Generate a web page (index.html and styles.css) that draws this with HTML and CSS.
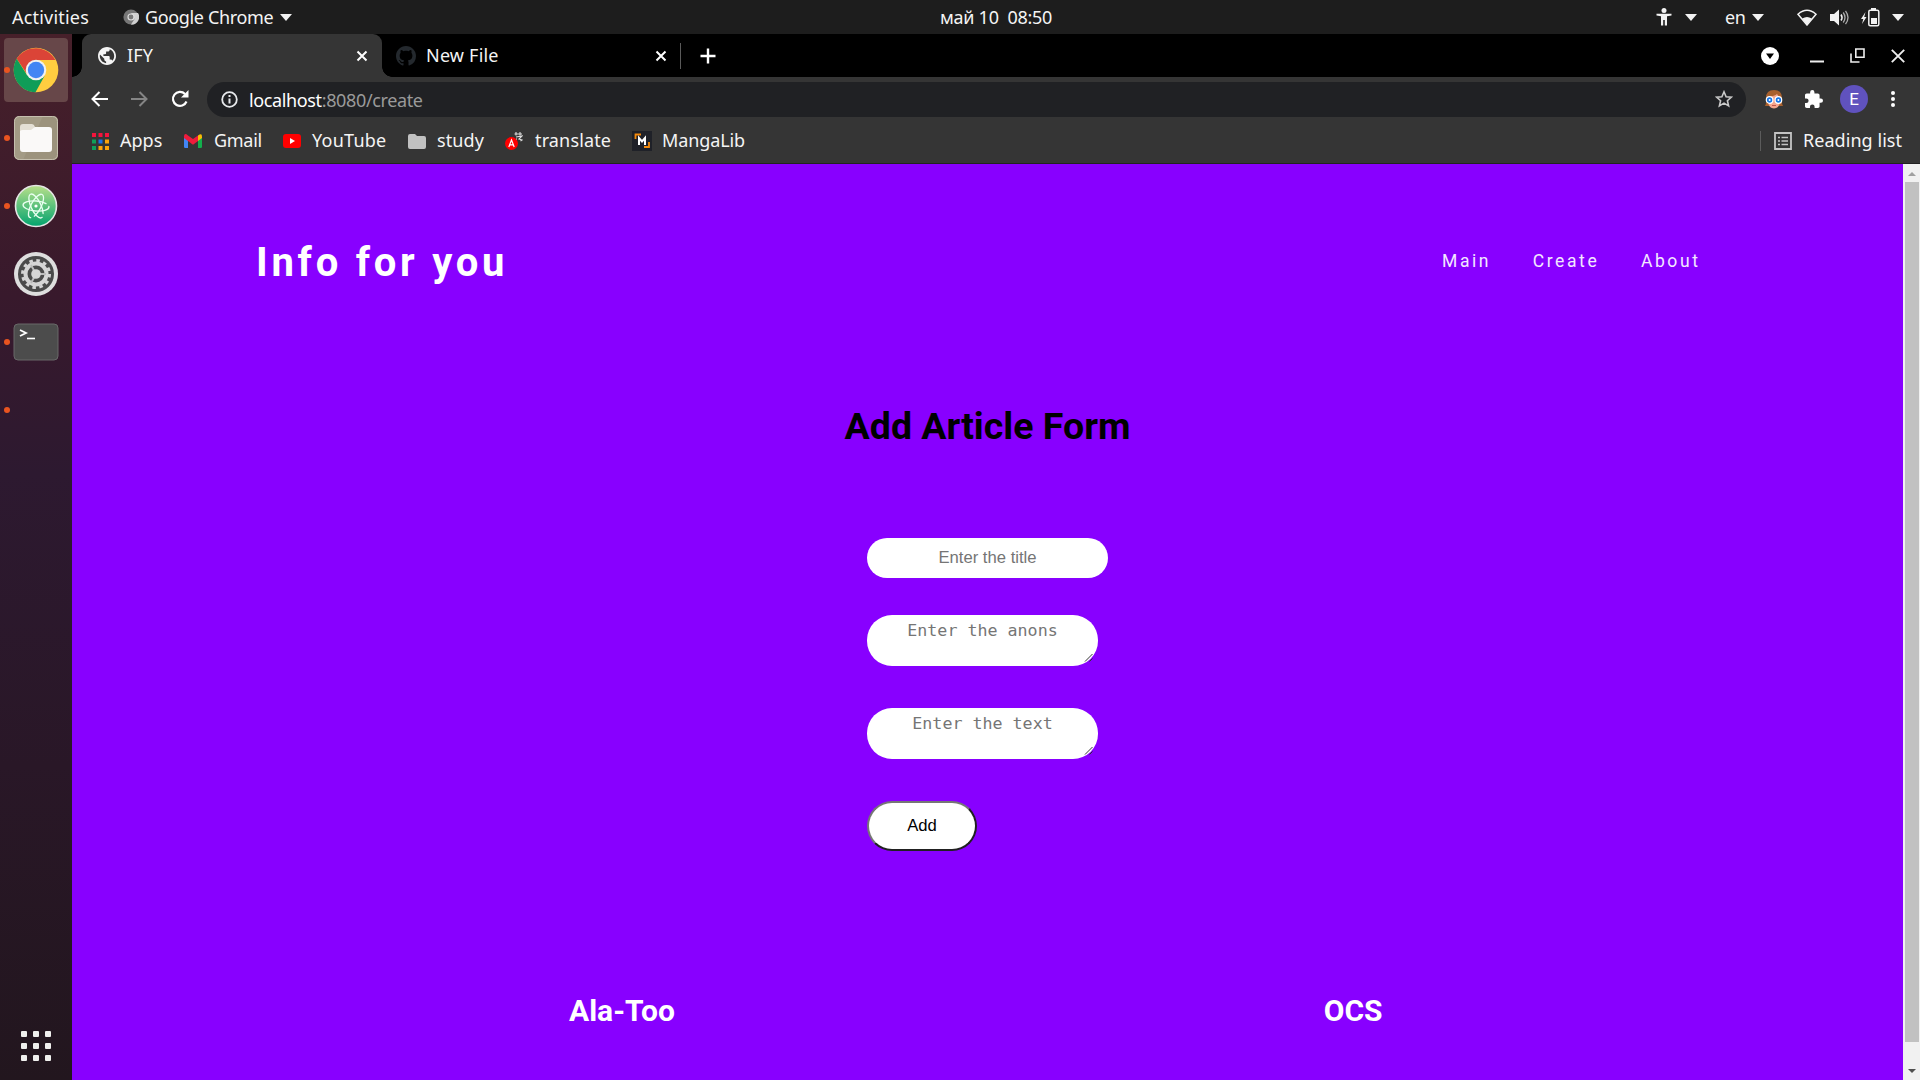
FILE: index.html
```html
<!DOCTYPE html>
<html lang="en">
<head>
<meta charset="utf-8">
<title>IFY</title>
<link rel="stylesheet" href="styles.css">
</head>
<body>
<div class="desktop">
  <header class="topbar">
    <span class="label activities">Activities</span>
    <svg class="app-icon" width="16" height="16" viewBox="0 0 16 16"><circle cx="8" cy="8" r="7.6" fill="#777"/><path d="M8 4h7A7.6 7.6 0 0 1 8 15.6L11.5 10z" fill="#d0d0d0"/><circle cx="8" cy="8" r="3.6" fill="#ddd"/><circle cx="8" cy="8" r="2.4" fill="#777"/></svg>
    <span class="label app-name">Google Chrome</span>
    <i class="caret"></i>
    <span class="label clock">май 10&nbsp; 08:50</span>
    <div class="tray">
      <svg width="16" height="18" viewBox="0 0 16 18" fill="#f2f2f2"><circle cx="8" cy="2.6" r="2.5"/><path d="M.5 5.7h15v1.7L11 8.2V17.500H8.800V12H7.200v5.500H5V8.200L.5 7.400z"/></svg>
      <i class="caret tray-a11y"></i>
      <span class="label lang">en</span>
      <i class="caret tray-lang"></i>
      <svg class="wifi" width="20" height="17" viewBox="0 0 20 17"><path d="M1 5.200Q10-2.800 19 5.200L10 16z" fill="none" stroke="#f2f2f2" stroke-width="1.500"/><path d="M5.200 9.500Q10 6.500 14.800 9.500L10 16z" fill="#f2f2f2"/></svg>
      <svg class="volume" width="19" height="17" viewBox="0 0 19 17"><path d="M0 5h4l5-4.500v16L4 12H0z" fill="#f2f2f2"/><path d="M11 5.500q2 3 0 6" fill="none" stroke="#f2f2f2" stroke-width="1.600"/><path d="M13.200 3.500q3.600 5 0 10M15.500 1.800q5 6.700 0 13.400" fill="none" stroke="#aaa" stroke-width="1.300"/></svg>
      <svg class="battery" width="19" height="19" viewBox="0 0 19 19" fill="#f2f2f2"><path d="M4.500 4 0 11h2.300L1 16l4.500-7H3.200z"/><path d="M10 0h5v2h-5z"/><rect x="7.800" y="2.200" width="10" height="15.600" rx="1.500" fill="none" stroke="#f2f2f2" stroke-width="1.500"/><path d="M10 10h6v6h-6z"/></svg>
      <i class="caret tray-power"></i>
    </div>
  </header>

  <div class="workspace">
    <nav class="dock">
      <div class="dock-item running active">
        <svg width="46" height="46" viewBox="0 0 46 46"><circle cx="23" cy="23" r="22.300" fill="#ffcd40"/><path d="M3.700 11.800A22.300 22.300 0 0 1 42.300 13H23L14 27z" fill="#db4437"/><path d="M3.700 11.800A22.300 22.300 0 0 0 22.500 45.300L31.500 29 23 33 14 28z" fill="#0f9d58"/><circle cx="23" cy="23" r="10.300" fill="#f1f1f1"/><circle cx="23" cy="23" r="8.200" fill="#4285f4"/></svg>
      </div>
      <div class="dock-item running">
        <svg width="46" height="46" viewBox="0 0 46 46"><rect x="1" y="1" width="44" height="44" rx="5" fill="#a39b85"/><path d="M30 1h10q5 0 5 5v34q0 5-5 5H10z" fill="#999079" opacity=".7"/><rect x="1.500" y="1.500" width="43" height="43" rx="5" fill="none" stroke="#c5bfae"/><path d="M7 12q0-3 3-3h9q2 0 3 3h14v8H7z" fill="#e4e0d5"/><path d="M7 16q1-1 3-1h8l4-3h14q3 0 3 3v19q0 3-3 3H10q-3 0-3-3z" fill="#faf9f8"/></svg>
      </div>
      <div class="dock-item running">
        <svg width="44" height="44" viewBox="0 0 44 44"><defs><linearGradient id="atom" x2="0" y2="1"><stop stop-color="#b8e08a"/><stop offset="1" stop-color="#02a36e"/></linearGradient></defs><circle cx="22" cy="22" r="20.500" fill="url(#atom)" stroke="#e5e5e5" stroke-width="1.600"/><g fill="none" stroke="#e9fff0" stroke-width="1.300" stroke-linecap="round" stroke-dasharray="54 4"><ellipse cx="22" cy="22" rx="13" ry="5" transform="rotate(5 22 22)"/><ellipse cx="22" cy="22" rx="13" ry="5" transform="rotate(65 22 22)"/><ellipse cx="22" cy="22" rx="13" ry="5" transform="rotate(118 22 22)"/></g><circle cx="22" cy="22" r="1.600" fill="#fff"/></svg>
      </div>
      <div class="dock-item">
        <svg width="46" height="46" viewBox="0 0 46 46"><circle cx="23" cy="23" r="22" fill="#dedede"/><circle cx="23" cy="23" r="18" fill="#4a4a4a"/><circle cx="23" cy="23" r="13.500" fill="none" stroke="#d5d5d5" stroke-width="3" stroke-dasharray="3.530 3.530"/><circle cx="23" cy="23" r="10.500" fill="none" stroke="#d5d5d5" stroke-width="4"/><path d="M23 23h10M23 23l-5-9M23 23l-5 9" stroke="#bbb" stroke-width="2"/><circle cx="23" cy="23" r="4.800" fill="#d5d5d5"/></svg>
      </div>
      <div class="dock-item running">
        <svg width="46" height="38" viewBox="0 0 46 38"><rect x="1" y="1" width="44" height="36" rx="4" fill="#4c4c4c" stroke="#686868"/><path d="m7 7 6 3-6 3" fill="none" stroke="#fff" stroke-width="1.800"/><path d="M14 15.500h8" stroke="#fff" stroke-width="1.600"/></svg>
      </div>
      <div class="dock-item running"></div>
      <svg class="all-apps" width="30" height="30" viewBox="0 0 30 30" fill="#f0f0ee"><g id="r"><rect width="6" height="6" rx="1"/><rect x="12" width="6" height="6" rx="1"/><rect x="24" width="6" height="6" rx="1"/></g><use href="#r" y="12"/><use href="#r" y="24"/></svg>
    </nav>

    <main class="browser">
      <div class="tabstrip">
        <div class="tab current">
          <svg width="18" height="18" viewBox="2 2 20 20"><path fill="#f4f4f4" d="M12 2C6.480 2 2 6.480 2 12s4.480 10 10 10 10-4.480 10-10S17.520 2 12 2zm-1 17.930c-3.950-.49-7-3.850-7-7.930 0-.62.08-1.210.21-1.790L9 15v1c0 1.100.9 2 2 2v1.930zm6.900-2.540c-.26-.81-1-1.390-1.900-1.390h-1v-3c0-.55-.45-1-1-1H8v-2h2c.55 0 1-.45 1-1V7h2c1.100 0 2-.9 2-2v-.41c2.930 1.190 5 4.060 5 7.410 0 2.080-.8 3.970-2.100 5.390z"/></svg>
          <span class="label t-ify">IFY</span>
          <svg class="close" width="12" height="12" viewBox="0 0 12 12"><path d="m1.500 1.500 9 9m0-9-9 9" stroke="#fff" stroke-width="2"/></svg>
        </div>
        <div class="tab">
          <svg width="20" height="20" viewBox="0 0 16 16"><path fill="#24292e" d="M8 0C3.580 0 0 3.580 0 8c0 3.540 2.290 6.530 5.470 7.590.4.070.55-.17.55-.38 0-.19-.010-.82-.010-1.490-2.010.37-2.530-.49-2.690-.94-.090-.23-.48-.94-.82-1.130-.28-.15-.68-.52-.010-.53.63-.010 1.080.58 1.230.82.72 1.210 1.870.87 2.330.66.070-.52.28-.87.51-1.070-1.780-.2-3.640-.89-3.640-3.950 0-.87.31-1.590.82-2.150-.080-.2-.36-1.020.080-2.120 0 0 .67-.21 2.200.82.64-.18 1.320-.27 2-.27s1.360.090 2 .27c1.530-1.040 2.200-.82 2.200-.82.44 1.100.16 1.920.080 2.120.51.56.82 1.270.82 2.150 0 3.070-1.870 3.750-3.650 3.950.29.25.54.73.54 1.480 0 1.070-.010 1.930-.010 2.200 0 .21.15.46.55.38A8 8 0 0 0 16 8c0-4.420-3.580-8-8-8z"/></svg>
          <span class="label t-new">New File</span>
          <svg class="close" width="12" height="12" viewBox="0 0 12 12"><path d="m1.500 1.500 9 9m0-9-9 9" stroke="#fff" stroke-width="2"/></svg>
        </div>
        <i class="tab-divider"></i>
        <svg width="16" height="16" viewBox="0 0 16 16"><path d="M8 .5v15M.5 8h15" stroke="#fff" stroke-width="2.400"/></svg>
        <div class="window-controls">
          <svg width="18" height="18" viewBox="0 0 18 18"><circle cx="9" cy="9" r="9" fill="#fff"/><path d="M5 6.500h8L9 12z" fill="#000"/></svg>
          <svg class="minimize" width="14" height="14" viewBox="0 0 14 14"><path d="M0 12.500h14" stroke="#eee" stroke-width="2"/></svg>
          <svg class="restore" width="15" height="15" viewBox="0 0 15 15" fill="none" stroke="#eee" stroke-width="1.600"><path d="M5.800 1H14v8.200H5.800zM1 5.500V14h8.500"/></svg>
          <svg class="win-close" width="14" height="14" viewBox="0 0 14 14"><path d="m.8.800 12.400 12.400m0-12.400L.8 13.200" stroke="#eee" stroke-width="1.900"/></svg>
        </div>
      </div>

      <div class="toolbar">
        <svg width="17" height="16" viewBox="0 0 17 16" fill="none" stroke="#fff" stroke-width="2"><path d="M17 8H1.500M8.500 1l-7 7 7 7"/></svg>
        <svg class="forward" width="17" height="16" viewBox="0 0 17 16" fill="none" stroke="#858585" stroke-width="2"><path d="M0 8h15.500M8.500 1l7 7-7 7"/></svg>
        <svg class="reload" width="18" height="18" viewBox="0 0 18 18"><path d="M15.500 11.500A7 7 0 1 1 14 4" fill="none" stroke="#fff" stroke-width="2.200"/><path d="M17.500 0v7.500H10z" fill="#fff"/></svg>
        <div class="omnibox">
          <svg width="17" height="17" viewBox="0 0 17 17"><circle cx="8.500" cy="8.500" r="7.300" fill="none" stroke="#e8eaed" stroke-width="1.800"/><path d="M8.500 7.500v5M8.500 4v2" stroke="#e8eaed" stroke-width="2"/></svg>
          <span class="label url">localhost<span class="dim">:8080/create</span></span>
          <svg class="star" width="18" height="18" viewBox="0 0 18 18"><path d="m9 1.800 2.100 4.900 5.300.500-4 3.500 1.200 5.200L9 13.100l-4.600 2.800 1.200-5.200-4-3.500 5.300-.500z" fill="none" stroke="#c9c9c9" stroke-width="1.600"/></svg>
        </div>
        <svg class="ext" width="18" height="19" viewBox="0 0 18 19"><path d="M0 16Q1.500 14 1 8 1 0 9 0t8 8q-.500 6 1 8z" fill="#a8602d"/><path d="M3 7q7-1 9-3 1 2 3 3v5q-1 6.500-6 6.500T3 12z" fill="#f3a58d"/><g fill="#1373e6" stroke="#fff" stroke-width="1.200"><circle cx="4.600" cy="10" r="3.300"/><circle cx="13.400" cy="10" r="3.300"/></g><g fill="#fff"><circle cx="4.600" cy="10" r="1"/><circle cx="13.400" cy="10" r="1"/></g><path d="M7 15.500h4" stroke="#c2554b"/></svg>
        <svg class="puzzle" width="18" height="18" viewBox="2 1 21 21" fill="#fff"><path d="M20.500 11H19V7c0-1.100-.9-2-2-2h-4V3.500a2.500 2.500 0 0 0-5 0V5H4c-1.100 0-2 .9-2 2v3.800h1.500a2.700 2.700 0 0 1 0 5.400H2V20c0 1.100.9 2 2 2h3.800v-1.500a2.700 2.700 0 0 1 5.400 0V22H17c1.100 0 2-.9 2-2v-4h1.500a2.500 2.500 0 0 0 0-5z"/></svg>
        <span class="avatar">E</span>
        <svg class="kebab" width="4" height="16" viewBox="0 0 4 16" fill="#fff"><circle cx="2" cy="2" r="2"/><circle cx="2" cy="8" r="2"/><circle cx="2" cy="14" r="2"/></svg>
      </div>

      <div class="bookmarks">
        <svg class="bm-apps" width="17" height="17" viewBox="0 0 17 17"><path d="M0 0h4v4H0zM6.500 0h4v4h-4zM13 0h4v4h-4z" fill="#f4143c"/><path d="M0 6.500h4v4H0zM0 13h4v4H0z" fill="#0fa05a"/><path d="M6.500 6.500h4v4h-4z" fill="#1a73e8"/><path d="M13 6.500h4v4h-4zM6.500 13h4v4h-4zM13 13h4v4h-4z" fill="#fba40a"/></svg>
        <span class="label b-apps">Apps</span>
        <svg class="bm-gmail" width="18" height="14" viewBox="0 0 18 14"><path d="M0 2.500 4 5v9H1.200Q0 14 0 12.800z" fill="#4285f4"/><path d="M18 2.500 14 5v9h2.800Q18 14 18 12.800z" fill="#12b04c"/><path d="M14 1.500Q18-1.500 18 2.500V4l-4 3z" fill="#fbbc04"/><path d="M0 4V2Q.5-1.500 4 1.500L9 5l5-3.500V7l-5 3.800L4 7z" fill="#ee1c3c"/></svg>
        <span class="label b-gmail">Gmail</span>
        <svg class="bm-yt" width="18" height="14" viewBox="0 0 18 14"><rect width="18" height="14" rx="3" fill="#f00"/><path d="m7 4 5 3-5 3z" fill="#fff"/></svg>
        <span class="label b-yt">YouTube</span>
        <svg class="bm-study" width="18" height="15" viewBox="0 0 18 15"><path d="M0 2Q0 0 2 0h5l2 2h7q2 0 2 2v9q0 2-2 2H2q-2 0-2-2z" fill="#c1c1c1"/></svg>
        <span class="label b-study">study</span>
        <svg class="bm-tr" width="18" height="18" viewBox="0 0 18 18"><circle cx="6.500" cy="11.500" r="6.500" fill="#f00"/><path d="m3.800 15 2.700-7 2.700 7M4.800 12.800h3.400" fill="none" stroke="#fff" stroke-width="1.200"/><path d="M9.500 2H17M11 0v3.500M15 0v3.500M11 5l6-1-3 3 3 1-1.500 1M12 7h-1" fill="none" stroke="#ddd" stroke-width="1.100"/></svg>
        <span class="label b-tr">translate</span>
        <svg class="bm-manga" width="20" height="20" viewBox="0 0 20 20"><path d="M0 0h20v20H0z" fill="#1f2128"/><path d="M3.500 8V3.500H9M17 11v5h-5" fill="none" stroke="#f58a0b" stroke-width="1.800"/><path d="M7 14V7l3 3.500L13 7v7" fill="none" stroke="#fff" stroke-width="2"/></svg>
        <span class="label b-manga">MangaLib</span>
        <div class="reading">
          <svg width="18" height="18" viewBox="0 0 18 18"><path d="M1 1h16v16H1z" fill="none" stroke="#c4c4c4" stroke-width="1.800"/><path d="M4 5.500h2M4 9h2M4 12.500h2M7.500 5.500H14M7.500 9H14M7.500 12.500H14" stroke="#c4c4c4" stroke-width="1.600"/></svg>
          <span class="label b-read">Reading list</span>
        </div>
      </div>

      <div class="viewport">
        <div class="page">
          <header class="site-header">
            <h1 class="brand">Info for you</h1>
            <nav class="menu"><a>Main</a><a>Create</a><a>About</a></nav>
          </header>
          <h2 class="form-title">Add Article Form</h2>
          <form class="article-form">
            <input class="field title-field" type="text" placeholder="Enter the title">
            <div class="area-wrap">
              <textarea class="field area" placeholder="Enter the anons"></textarea>
              <svg class="grip" width="10" height="9" viewBox="0 0 10 9"><path d="M1 8.500 8.500 1M5.500 8.500 8.500 5.500" stroke="#333" stroke-width="1"/></svg>
            </div>
            <div class="area-wrap">
              <textarea class="field area" placeholder="Enter the text"></textarea>
              <svg class="grip" width="10" height="9" viewBox="0 0 10 9"><path d="M1 8.500 8.500 1M5.500 8.500 8.500 5.500" stroke="#333" stroke-width="1"/></svg>
            </div>
            <button class="add" type="button">Add</button>
          </form>
          <footer class="site-footer"><h3>Ala-Too</h3><h3>OCS</h3></footer>
        </div>
        <div class="scrollbar">
          <svg width="17" height="17" viewBox="0 0 17 17"><path d="M5 12l4-4 4 4z" fill="#a0a0a0"/></svg>
          <i class="thumb"></i>
          <svg width="17" height="17" viewBox="0 0 17 17"><path d="M5 6h8l-4 4z" fill="#505050"/></svg>
        </div>
      </div>
    </main>
  </div>
</div>
</body>
</html>
```
FILE: styles.css
```css
* { box-sizing: border-box; }
body { margin: 0; overflow: hidden; font-family: "Noto Sans", sans-serif; }
svg { display: block; flex: none; }
h1, h2, h3 { margin: 0; }

.desktop { width: 1920px; height: 1080px; display: flex; flex-direction: column; }
.label { flex: none; white-space: nowrap; font-size: 18px; line-height: 24px; color: #f4f4f4; }
.caret { flex: none; width: 0; height: 0; border: 6px solid transparent; border-top: 7px solid #f2f2f2; border-bottom: 0; }

/* System bar */
.topbar { height: 34px; flex: none; display: flex; align-items: center; padding-left: 12px; background: #1d1d1d; }
.activities { width: 111px; letter-spacing: .2px; }
.app-name { width: 129px; margin-left: 6px; letter-spacing: -.35px; }
.app-name + .caret { margin-left: 6px; }
.clock { width: 112px; margin-left: 648px; letter-spacing: -.27px; }
.tray { display: flex; align-items: center; margin-left: auto; padding-right: 16px; }
.tray-a11y { margin-left: 13px; }
.lang { width: 20px; margin-left: 28px; letter-spacing: -.4px; }
.tray-lang { margin-left: 7px; }
.wifi { margin-left: 33px; }
.volume { margin-left: 13px; }
.battery { margin-left: 12px; }
.tray-power { margin-left: 12px; }

.workspace { flex: 1; display: flex; min-height: 0; }

/* Dock */
.dock { width: 72px; flex: none; display: flex; flex-direction: column; padding: 4px; background: linear-gradient(#47202a 0, #38192c 25%, #2d1930 42%, #291727 70%, #22161e 100%); }
.dock-item { position: relative; width: 64px; height: 64px; flex: none; margin-bottom: 4px; border-radius: 4px; display: grid; place-items: center; }
.dock-item.active { background: #674749; }
.running::before { content: ""; position: absolute; left: 0; top: 29px; width: 6px; height: 6px; border-radius: 50%; background: #e95420; }
.all-apps { margin: auto auto 15px; }

/* Browser */
.browser { flex: 1; min-width: 0; display: flex; flex-direction: column; background: #353535; }
.tabstrip { height: 43px; flex: none; display: flex; align-items: center; padding-left: 10px; background: #000; }
.tab { height: 43px; width: 300px; display: flex; align-items: center; padding: 0 14px 0 16px; }
.tab.current { position: relative; background: #353535; border-radius: 9px 9px 0 0; }
.tab.current::before, .tab.current::after { content: ""; position: absolute; bottom: 0; width: 10px; height: 10px; }
.tab.current::before { left: -10px; background: radial-gradient(circle at 0 0, #000 9.5px, #353535 10px); }
.tab.current::after { right: -10px; background: radial-gradient(circle at 100% 0, #000 9.5px, #353535 10px); }
.tab:not(.current) { width: 298px; padding: 0 13px 0 14px; }
.tab .label { margin-left: 11px; padding-bottom: 2px; letter-spacing: .2px; }
.tab .t-new { margin-left: 10px; }
.tab .close { margin-left: auto; }
.tab-divider { width: 1px; height: 26px; margin-right: 19px; background: #5a5a5a; }
.window-controls { display: flex; align-items: center; margin-left: auto; padding-right: 15px; }
.minimize { margin-left: 31px; }
.restore { margin-left: 26px; }
.win-close { margin-left: 26px; }

.toolbar { height: 44px; flex: none; display: flex; align-items: center; padding: 0 21px 0 19px; }
.forward { margin-left: 23px; }
.reload { margin-left: 23px; }
.omnibox { width: 1539px; height: 35px; margin-left: 18px; display: flex; align-items: center; padding: 0 13px 0 14px; border-radius: 18px; background: #202124; }
.url { margin-left: 11px; padding-top: 1px; letter-spacing: -.37px; color: #fff; }
.dim { color: #9a9a9a; }
.star { margin-left: auto; }
.ext { margin-left: 19px; }
.puzzle { margin-left: 22px; }
.avatar { width: 28px; height: 28px; margin-left: 17px; border-radius: 50%; background: #6052be; color: #fff; font: 17px/28px Roboto, sans-serif; text-align: center; }
.kebab { margin-left: 23px; }

.bookmarks { height: 43px; flex: none; display: flex; align-items: center; padding-left: 20px; border-bottom: 1px solid #222; padding-bottom: 2px; }
.bookmarks .label { padding-bottom: 2px; }
.b-apps { width: 42px; margin-left: 11px; }
.bm-gmail { margin-left: 22px; }
.b-gmail { width: 48px; margin-left: 12px; letter-spacing: -.3px; }
.bm-yt { margin-left: 21px; }
.b-yt { width: 75px; margin-left: 11px; letter-spacing: .25px; }
.bm-study { margin-left: 21px; }
.b-study { width: 47px; margin-left: 11px; letter-spacing: .1px; }
.bm-tr { margin-left: 21px; }
.b-tr { width: 76px; margin-left: 12px; letter-spacing: .15px; }
.bm-manga { margin-left: 21px; }
.b-manga { margin-left: 10px; letter-spacing: -.1px; }
.reading { height: 20px; display: flex; align-items: center; margin-left: auto; padding-left: 13px; border-left: 1px solid #5c5c5c; }
.b-read { width: 99px; margin: 0 18px 0 11px; letter-spacing: .05px; }

/* Web page */
.viewport { flex: 1; min-height: 0; display: flex; }
.page { flex: 1; display: flex; flex-direction: column; background: #80f; font-family: Roboto, sans-serif; color: #fff; }
.site-header { height: 196px; display: flex; justify-content: space-between; align-items: center; padding: 0 202.5px 0 184px; }
.brand { padding-top: 2px; font-size: 40px; line-height: 48px; letter-spacing: 3.75px; }
.menu { display: flex; gap: 41.6px; padding-bottom: 2px; font-size: 17.5px; line-height: 24px; letter-spacing: 2.6px; color: #f3e8ff; }
.form-title { margin-top: 44px; text-align: center; font-size: 37.5px; line-height: 44px; color: #000; }
.article-form { width: 241px; margin: 90px auto 0; display: flex; flex-direction: column; align-items: flex-start; }
.field { display: block; margin: 0; border: 0; outline: 0; background: #fff; text-align: center; font-size: 16.67px; }
.title-field { width: 241px; height: 40px; padding: 0 10px; border-radius: 20px; font-family: "Liberation Sans", Arial, sans-serif; }
.area-wrap { position: relative; margin-top: 37px; }
.area-wrap + .area-wrap { margin-top: 42px; }
.area { width: 231px; height: 51px; padding: 6px 25px; border-radius: 25px; font-family: "DejaVu Sans Mono", monospace; overflow: hidden; resize: none; }
.grip { position: absolute; right: 4px; bottom: 4px; }
.add { width: 110px; height: 50px; margin-top: 42px; padding: 0; border: 2.5px outset #767676; border-radius: 25px; background: #fff; color: #000; font: 16.67px "Liberation Sans", Arial, sans-serif; }
.site-footer { display: flex; justify-content: space-between; margin: 142px 520.5px 0 497px; }
.site-footer h3 { font-size: 30px; line-height: 36px; }
.scrollbar { width: 17px; flex: none; display: flex; flex-direction: column; background: #f1f1f1; }
.thumb { width: 14px; height: 860px; margin: 1px 0 auto 2px; background: #c1c1c1; }
```
